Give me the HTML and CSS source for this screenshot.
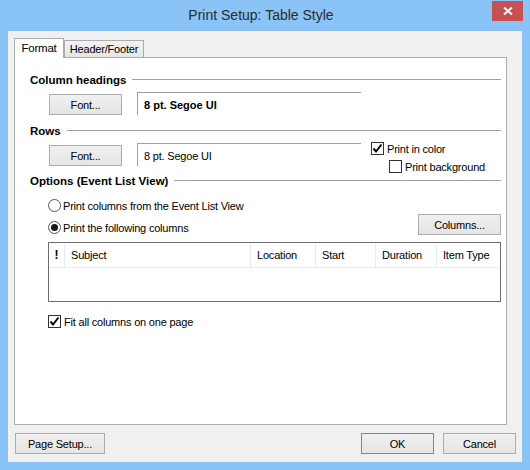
FILE: index.html
```html
<!DOCTYPE html>
<html>
<head>
<meta charset="utf-8">
<link rel="stylesheet" href="styles.css">
</head>
<body>
<div class="window">
  <div class="titlebar">
    <div class="title">Print Setup: Table Style</div>
    <div class="close">
      <svg width="10" height="8" viewBox="0 0 10 8"><path d="M1 0.5 L9 7.5 M9 0.5 L1 7.5" stroke="#fff" stroke-width="2" fill="none"/></svg>
    </div>
  </div>
  <div class="client">
    <div class="tabs">
      <div class="tab active">Format</div>
      <div class="tab second">Header/Footer</div>
    </div>
    <div class="panel">
      <div class="group-head"><span>Column headings</span></div>
      <div class="font-row">
        <button class="btn font-btn">Font...</button>
        <div class="font-field bold">8 pt. Segoe UI</div>
      </div>
      <div class="group-head rows-head"><span>Rows</span></div>
      <div class="font-row">
        <button class="btn font-btn">Font...</button>
        <div class="font-field">8 pt. Segoe UI</div>
        <div class="print-opts">
          <div class="check"><span class="box"><svg width="11" height="11" viewBox="0 0 11 11"><path d="M1.5 5.5 L4 8.5 L9.5 1.5" stroke="#000" stroke-width="2" fill="none"/></svg></span>Print in color</div>
          <div class="check indent"><span class="box"></span>Print background</div>
        </div>
      </div>
      <div class="group-head options-head"><span>Options (Event List View)</span></div>
      <div class="radio-row"><span class="radio"></span>Print columns from the Event List View</div>
      <div class="radio-row2">
        <div class="radio-label"><span class="radio on"></span>Print the following columns</div>
        <button class="btn cols-btn">Columns...</button>
      </div>
      <div class="table">
        <div class="thead">
          <div class="th c1">!</div>
          <div class="th c2">Subject</div>
          <div class="th c3">Location</div>
          <div class="th c4">Start</div>
          <div class="th c5">Duration</div>
          <div class="th c6">Item Type</div>
        </div>
      </div>
      <div class="check fit-row"><span class="box"><svg width="11" height="11" viewBox="0 0 11 11"><path d="M1.5 5.5 L4 8.5 L9.5 1.5" stroke="#000" stroke-width="2" fill="none"/></svg></span>Fit all columns on one page</div>
    </div>
    <div class="footer">
      <button class="btn page-btn">Page Setup...</button>
      <div class="spacer"></div>
      <button class="btn ok-btn">OK</button>
      <button class="btn cancel-btn">Cancel</button>
    </div>
  </div>
</div>
</body>
</html>
```

FILE: styles.css
```css
body {
  margin: 0;
  width: 530px;
  height: 470px;
  overflow: hidden;
  font-family: "Liberation Sans", Arial, sans-serif;
  font-size: 11px;
  letter-spacing: -0.2px;
  color: #000;
}
.window {
  width: 530px;
  height: 470px;
  background: #8ac4f6;
  display: flex;
  flex-direction: column;
}
.titlebar {
  height: 31px;
  display: flex;
  align-items: flex-start;
  flex-shrink: 0;
}
.title {
  flex: 1;
  text-align: center;
  font-size: 14px;
  letter-spacing: 0;
  line-height: 30px;
  padding-left: 30px;
  color: #2b2b2b;
}
.close {
  width: 31px;
  height: 20px;
  margin-top: 1px;
  margin-right: 7px;
  background: #c75050;
  display: flex;
  align-items: center;
  justify-content: center;
}
.client {
  margin: 0 8px;
  width: 514px;
  height: 431px;
  background: #f0f0f0;
  display: flex;
  flex-direction: column;
}
.tabs {
  display: flex;
  align-items: flex-end;
  height: 19px;
  padding: 7px 0 0 6px;
}
.tab {
  box-sizing: border-box;
  border: 1px solid #acacac;
  border-bottom: none;
  height: 17px;
  line-height: 16px;
  text-align: center;
  background: linear-gradient(#f2f2f2, #e6e6e6);
}
.tab.active {
  width: 50px;
  height: 20px;
  line-height: 18px;
  margin-bottom: -1px;
  background: #fff;
  position: relative;
  z-index: 1;
  font-size: 11.5px;
}
.tab.second {
  width: 80px;
}
.panel {
  margin-left: 6px;
  width: 493px;
  height: 368px;
  box-sizing: border-box;
  border: 1px solid #acacac;
  background: #fff;
  padding: 14px 5px 0 15px;
}
.group-head {
  display: flex;
  align-items: center;
  height: 15px;
  font-weight: bold;
  font-size: 11.5px;
  letter-spacing: 0;
  gap: 6px;
  white-space: nowrap;
}
.group-head::after {
  content: "";
  flex: 1;
  border-top: 1px solid #a0a0a0;
}
.rows-head { margin-top: 8px; }
.options-head { margin-top: 7px; }
.font-row {
  display: flex;
  align-items: flex-end;
  margin-top: 5px;
  height: 23px;
  padding-left: 19px;
}
.btn {
  box-sizing: border-box;
  height: 21px;
  border: 1px solid #acacac;
  background: linear-gradient(#f0f0f0, #e5e5e5);
  font: inherit;
  letter-spacing: inherit;
  color: #000;
  padding: 0;
  margin: 0;
}
.font-btn { width: 73px; }
.font-field {
  box-sizing: border-box;
  width: 224px;
  height: 23px;
  margin-left: 15px;
  border-top: 1px solid #a0a0a0;
  border-left: 1px solid #a0a0a0;
  padding: 3px 0 0 6px;
  line-height: 19px;
}
.bold { font-weight: bold; letter-spacing: 0; }
.print-opts {
  align-self: flex-start;
  margin-top: -1px;
  margin-left: 10px;
  display: flex;
  flex-direction: column;
  gap: 5px;
}
.check {
  display: flex;
  align-items: center;
  gap: 3px;
  height: 13px;
  white-space: nowrap;
}
.check.indent { margin-left: 18px; }
.box {
  width: 13px;
  height: 13px;
  box-sizing: border-box;
  border: 1px solid #333;
  background: #fff;
  display: flex;
  align-items: center;
  justify-content: center;
}
.radio-row {
  margin-top: 10px;
  padding-left: 18px;
  height: 15px;
  display: flex;
  align-items: center;
  gap: 2px;
}
.radio-row2 {
  margin-top: 1px;
  height: 21px;
  display: flex;
  align-items: flex-end;
  justify-content: space-between;
  padding-left: 18px;
}
.radio-label {
  height: 15px;
  display: flex;
  align-items: center;
  gap: 2px;
}
.radio {
  width: 13px;
  height: 13px;
  box-sizing: border-box;
  border: 1px solid #555;
  border-radius: 50%;
  background: #fff;
  display: flex;
  align-items: center;
  justify-content: center;
}
.radio.on::after {
  content: "";
  width: 7px;
  height: 7px;
  border-radius: 50%;
  background: #1a1a1a;
}
.cols-btn { width: 83px; }
.table {
  margin-top: 7px;
  margin-left: 18px;
  height: 60px;
  box-sizing: border-box;
  border: 1px solid #6e6e6e;
}
.thead {
  display: flex;
  height: 25px;
  box-sizing: border-box;
  border-bottom: 1px solid #e3ecf7;
}
.th {
  box-sizing: border-box;
  border-right: 1px solid #e3ecf7;
  padding-left: 6px;
  line-height: 24px;
  white-space: nowrap;
}
.th.c1 { width: 16px; padding-left: 0; text-align: center; font-weight: bold; font-size: 12px; }
.th.c2 { width: 186px; }
.th.c3 { width: 65px; }
.th.c4 { width: 60px; }
.th.c5 { width: 61px; }
.th.c6 { flex: 1; border-right: none; }
.fit-row {
  margin-top: 13px;
  margin-left: 18px;
}
.footer {
  display: flex;
  margin-top: 8px;
  padding: 0 6px 0 7px;
  gap: 9px;
}
.spacer { flex: 1; }
.page-btn { width: 90px; }
.ok-btn { width: 73px; border-color: #3399ff; }
.cancel-btn { width: 73px; }
```
